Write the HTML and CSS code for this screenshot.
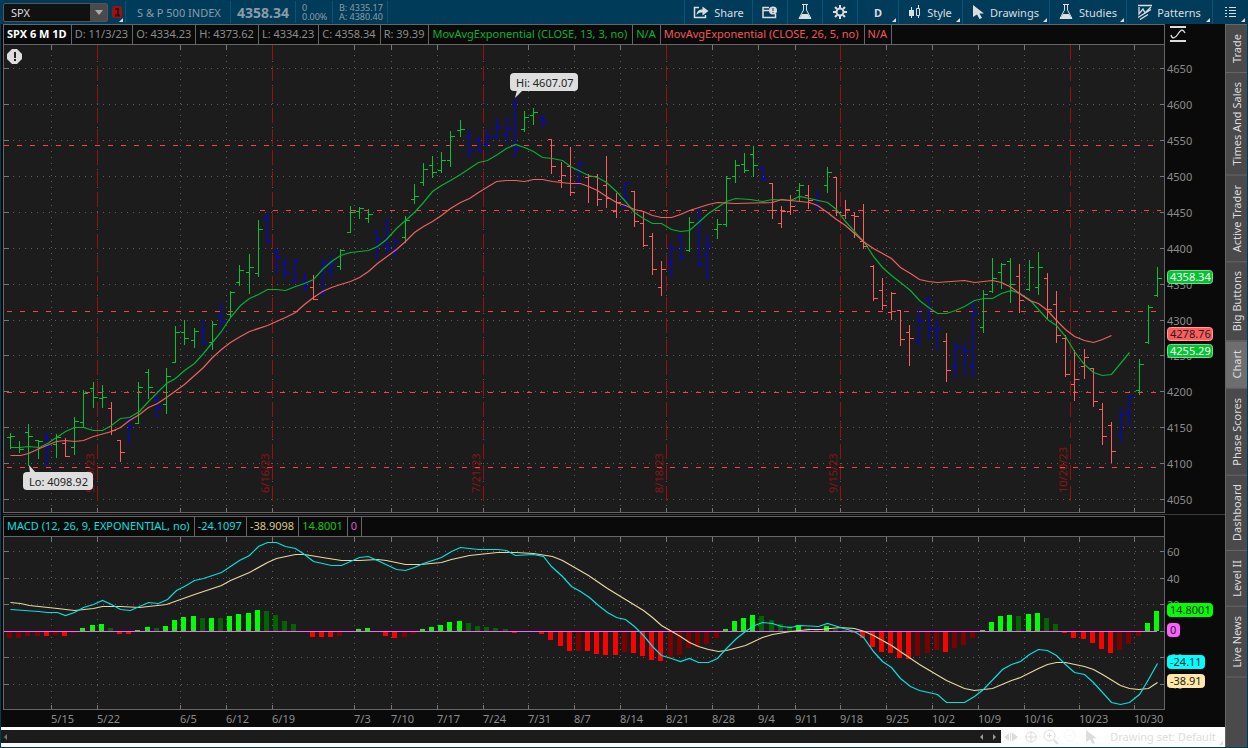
FILE: index.html
```html
<!DOCTYPE html>
<html lang="en">
<head>
    <meta charset="UTF-8">
    <meta name="viewport" content="width=device-width, initial-scale=1.0">
    <title>SPX Chart</title>
    <link rel="stylesheet" href="styles.css">
</head>
<body>
    <header class="toolbar">
        <div class="symbol">
            <input type="text" class="symbol-input" value="SPX" aria-label="Symbol">
            <button type="button" class="symbol-drop" aria-label="Recent symbols">
                <svg width="8" height="5"><path d="M0 0h8L4 5z" fill="#aaa"/></svg>
            </button>
        </div>
        <button type="button" class="link-btn corner" aria-label="Link colour">
            <svg width="10" height="12"><rect width="10" height="12" rx="2" fill="#9c1111"/><path d="M3 3h3v6M3 9.500h5" stroke="#3a0a0a" stroke-width="2" fill="none"/></svg>
        </button>
        <div class="info name">S &amp; P 500 INDEX</div>
        <div class="info last">4358.34</div>
        <div class="info pair change"><span>0</span><span>0.00%</span></div>
        <div class="info pair bidask"><span>B: 4335.17</span><span>A: 4380.40</span></div>
        <nav class="actions">
            <button type="button" class="tool w-share">
                <svg width="16" height="14" fill="none" stroke="#ddd"><path d="M6 2.500H1.500v10h11V10" stroke-width="1.500"/><path d="M3.500 10C4 6 6 4.500 9.500 4.500V1.500l6 4.500-6 4.500V7.500C7 7.500 5 8 3.500 10z" fill="#ddd" stroke="none"/></svg>
                Share
            </button>
            <button type="button" class="tool w-icon" aria-label="Chart alerts">
                <svg width="16" height="13" fill="none" stroke="#ddd"><path d="M7 1.500H1v10h12.500V8M1 4.500h6" stroke-width="1.500"/><circle cx="11" cy="4.500" r="4" fill="#ddd" stroke="none"/><path d="M11 2v3M11 6v1" stroke="#003b5a"/></svg>
            </button>
            <button type="button" class="tool w-icon" aria-label="Edit studies">
                <svg width="14" height="16" fill="none" stroke="#ddd"><path d="M4 .5h6M5.500 1v5L1 14.500h12L8.500 6V1"/><path d="M4 10h6l3 5H1z" fill="#ddd" stroke="none"/></svg>
            </button>
            <button type="button" class="tool w-icon" aria-label="Settings">
                <svg width="14" height="14" fill="none" stroke="#ddd"><circle cx="7" cy="7" r="3.500" stroke-width="2"/><path d="M7 0v3M7 11v3M0 7h3M11 7h3M2 2l2 2M10 10l2 2M12 2l-2 2M4 10l-2 2" stroke-width="2"/></svg>
            </button>
            <button type="button" class="tool w-period corner"><b>D</b></button>
            <button type="button" class="tool w-style corner">
                <svg width="12" height="14" fill="none" stroke="#ddd"><path d="M2.500 2v11M9.500 0v3M9.500 10v3"/><path d="M0 5h5v6H0z" fill="#ddd" stroke="none"/><path d="M7.500 3.500h3v7h-3z"/></svg>
                Style
            </button>
            <button type="button" class="tool w-drawings corner">
                <svg width="11" height="14"><path d="M0 0l11 8.500H6.500L9 13l-2.500 1L4 9.500 0 12z" fill="#ddd"/></svg>
                Drawings
            </button>
            <button type="button" class="tool w-studies corner">
                <svg width="14" height="16" fill="none" stroke="#ddd"><path d="M4 .5h6M5.500 1v5L1 14.500h12L8.500 6V1"/><path d="M4 10h6l3 5H1z" fill="#ddd" stroke="none"/></svg>
                Studies
            </button>
            <button type="button" class="tool w-patterns corner">
                <svg width="14" height="16" fill="none" stroke="#ddd"><path d="M0 1.500h14" stroke-width="1.500"/><path d="M1 3v7l4-5 2 4 6-6M0 13.500l13-8M2 15.500l8-5" stroke-width="1.300"/></svg>
                Patterns
            </button>
            <button type="button" class="tool w-menu corner" aria-label="Menu">
                <svg width="11" height="11" fill="#ddd"><path d="M0 0h2v1H0zM4 0h7v1H4zM0 3h2v1H0zM4 3h7v1H4zM0 6h2v1H0zM4 6h7v1H4zM0 9h2v1H0zM4 9h7v1H4z"/></svg>
            </button>
        </nav>
    </header>

    <main class="workspace">
        <div class="charts">
            <section class="chart-row price-row">
                <div class="panel">
                    <div class="legend">
                        <span class="title">SPX 6 M 1D</span>
                        <span>D: 11/3/23</span>
                        <span>O: 4334.23</span>
                        <span>H: 4373.62</span>
                        <span>L: 4334.23</span>
                        <span>C: 4358.34</span>
                        <span>R: 39.39</span>
                        <span class="study green">MovAvgExponential (CLOSE, 13, 3, no)</span>
                        <span class="green">N/A</span>
                        <span class="study red">MovAvgExponential (CLOSE, 26, 5, no)</span>
                        <span class="red">N/A</span>
                    </div>
                    <svg class="plot" id="pricePlot"></svg>
                </div>
                <div class="axis">
                    <button type="button" class="scale-btn" aria-label="Price scale">
                        <svg width="16" height="17" fill="none" stroke="#ddd"><path d="M0 1h16M0 15h16" stroke-width="2"/><path d="M1 9c1 4 4 4 7-1s5-5 7-1" stroke-width="1.300"/></svg>
                    </button>
                    <svg class="scale" id="priceAxis"></svg>
                </div>
            </section>
            <div class="splitter"></div>
            <section class="chart-row macd-row">
                <div class="panel">
                    <div class="legend">
                        <span class="cyan">MACD (12, 26, 9, EXPONENTIAL, no)</span>
                        <span class="cyan">-24.1097</span>
                        <span class="tan">-38.9098</span>
                        <span class="lime">14.8001</span>
                        <span class="pink">0</span>
                    </div>
                    <svg class="plot" id="macdPlot"></svg>
                </div>
                <div class="axis">
                    <div class="axis-head"></div>
                    <svg class="scale" id="macdAxis"></svg>
                </div>
            </section>
            <svg class="dates" id="dates"></svg>
            <footer class="bottom">
                <div class="scrollbar">
                    <button type="button" aria-label="Scroll left"><svg width="3" height="6"><path d="M3 0v6L0 3z" fill="#777"/></svg></button>
                    <span class="track"></span>
                    <button type="button" aria-label="Scroll left one bar"><svg width="3" height="6"><path d="M3 0v6L0 3z" fill="#999"/></svg></button>
                    <button type="button" aria-label="Scroll right"><svg width="3" height="6"><path d="M0 0v6l3-3z" fill="#999"/></svg></button>
                </div>
                <div class="zoom-tools">
                    <button type="button" aria-label="Pan"><svg width="14" height="10" fill="#ddd"><path d="M0 5l5-4v8zM14 5L9 1v8zM6 1h1v8H6zM8 1h1v8H8z"/></svg></button>
                    <button type="button" aria-label="Crosshair"><svg width="12" height="12" fill="none" stroke="#ddd"><circle cx="6" cy="6" r="5"/><path d="M6 0v12M0 6h12"/></svg></button>
                    <button type="button" aria-label="Zoom in"><svg width="16" height="16" fill="none" stroke="#ddd"><circle cx="6.500" cy="6.500" r="5.500"/><path d="M6.500 4v5M4 6.500h5"/><path d="M11 11l4 4" stroke-width="2"/></svg></button>
                    <button type="button" aria-label="Zoom out"><svg width="16" height="16" fill="none" stroke="#f8f8f8"><circle cx="6.500" cy="6.500" r="5.500"/><path d="M4 6.500h5"/></svg></button>
                    <button type="button" aria-label="Pointer"><svg width="11" height="14"><path d="M0 0l11 8.500H6.500L9 13l-2.500 1L4 9.500 0 12z" fill="#ddd"/></svg></button>
                </div>
                <button type="button" class="drawing-set corner">Drawing set: Default</button>
            </footer>
        </div>
        <nav class="tabs">
            <button type="button">Trade</button>
            <button type="button">Times And Sales</button>
            <button type="button">Active Trader</button>
            <button type="button">Big Buttons</button>
            <button type="button" class="active">Chart</button>
            <button type="button">Phase Scores</button>
            <button type="button">Dashboard</button>
            <button type="button">Level II</button>
            <button type="button">Live News</button>
        </nav>
    </main>

    <script src="chart.js"></script>
</body>
</html>
```

FILE: styles.css
```css
* {
    margin: 0;
    padding: 0;
    box-sizing: border-box;
}

body {
    display: flex;
    flex-direction: column;
    height: 100vh;
    padding: 0 1px 1px;
    overflow: hidden;
    background-color: #003b5a;
    font-family: "Noto Sans", sans-serif;
    font-size: 11px;
    color: #8c8c8c;
}

button, input {
    border: none;
    background: none;
    font: inherit;
    color: inherit;
}

svg {
    display: block;
    flex-shrink: 0;
}

/* Toolbar */
.toolbar {
    display: flex;
    align-items: center;
    height: 24px;
    flex-shrink: 0;
}

.symbol {
    display: flex;
    width: 105px;
    height: 19px;
    margin-left: 2px;
    border: 1px solid #555;
    border-radius: 2px;
    background-color: #111;
}

.symbol-input {
    flex: 1;
    min-width: 0;
    padding-left: 7px;
    color: #ddd;
}

.symbol-drop {
    display: flex;
    align-items: center;
    justify-content: center;
    width: 17px;
    background-color: #4a4a4a;
}

.corner {
    position: relative;
}

.corner::after {
    content: "";
    position: absolute;
    right: 2px;
    bottom: 2px;
    border-left: 4px solid transparent;
    border-bottom: 4px solid #ddd;
}

.link-btn {
    display: flex;
    align-items: center;
    justify-content: center;
    width: 17px;
    height: 24px;
}

.info {
    display: flex;
    align-items: center;
    height: 22px;
    border-left: 1px solid #0a5278;
    color: #8b9ba6;
}

.name {
    width: 105px;
    padding-left: 11px;
    font-size: 11px;
}

.last {
    width: 65px;
    padding-left: 6px;
    font-size: 14px;
    font-weight: bold;
}

.pair {
    flex-direction: column;
    align-items: flex-start;
    justify-content: center;
    padding-left: 6px;
    font-size: 9px;
    line-height: 9px;
}

.change {
    width: 37px;
}

.bidask {
    width: 56px;
    border-right: 1px solid #0a5278;
}

.actions {
    display: flex;
    margin-left: auto;
}

.tool {
    display: flex;
    align-items: center;
    justify-content: center;
    gap: 6px;
    height: 24px;
    border-left: 1px solid #0a5278;
    color: #ddd;
    white-space: nowrap;
}

.w-share { width: 68px; gap: 5px; }
.w-icon { width: 35px; }
.w-period { width: 41px; }
.w-style { width: 64px; }
.w-drawings { width: 87px; }
.w-studies { width: 77px; }
.w-patterns { width: 86px; gap: 5px; }
.w-menu { width: 35px; }

/* Workspace */
.workspace {
    display: flex;
    flex: 1;
    min-height: 0;
}

.charts {
    display: flex;
    flex-direction: column;
    flex: 1;
    min-width: 0;
    background-color: #0a0a0a;
}

.chart-row {
    display: flex;
    min-height: 0;
    padding-left: 2px;
}

.price-row { flex: 489; }
.macd-row { flex: 194; }

.panel {
    display: flex;
    flex-direction: column;
    flex: 1;
    min-width: 0;
    border: 1px solid #666;
    background-color: #1c1c1c;
}

.legend {
    display: flex;
    height: 20px;
    flex-shrink: 0;
    border-bottom: 1px solid #666;
    background-color: #0a0a0a;
    line-height: 17px;
    white-space: nowrap;
}

.legend span {
    padding: 0 4px 0 3px;
    border-right: 1px solid #666;
}

.legend .study {
    padding: 0 5px 0 3px;
}

.legend .title { color: #fff; font-weight: bold; }
.green { color: #10b030; }
.red { color: #f05858; }
.cyan { color: #10dede; }
.tan { color: #d8c690; }
.lime { color: #10c810; }
.pink { color: #d858d8; }

.plot, .scale {
    width: 100%;
    flex: 1;
    min-height: 0;
}

.axis {
    display: flex;
    flex-direction: column;
    width: 60px;
    padding-bottom: 1px;
}

.scale-btn, .axis-head {
    height: 21px;
    padding: 2px 5px;
}

.splitter {
    height: 3px;
    margin-left: 2px;
    border-top: 1px solid #0a0a0a;
    border-bottom: 1px solid #0a0a0a;
    background-color: #3a3a3a;
}

.dates {
    width: 100%;
    height: 17px;
}

svg text {
    fill: #8c8c8c;
    font-size: 11px;
}

svg .expiry {
    fill: #8a1414;
}

/* Bottom bar */
.bottom {
    display: flex;
    align-items: center;
    height: 20px;
    background-color: #fff;
    color: #ddd;
}

.scrollbar {
    display: flex;
    align-items: center;
    flex: 1;
    gap: 10px;
    height: 13px;
    margin-bottom: 1px;
    padding: 0 5px 0 3px;
    background-color: #1c1c1c;
}

.track {
    flex: 1;
}

.zoom-tools {
    display: flex;
}

.zoom-tools button {
    display: flex;
    align-items: center;
    justify-content: center;
    width: 20px;
    height: 20px;
}

.drawing-set {
    width: 124px;
    height: 20px;
    padding-bottom: 2px;
    text-align: center;
}

/* Side tabs */
.tabs {
    display: flex;
    flex-direction: column;
    width: 22px;
    border-left: 1px solid #666;
    border-top: 1px solid #666;
    background-color: #4a4a4a;
}

.tabs button {
    padding: 9px 0;
    border-top: 1px solid #666;
    color: #ddd;
    line-height: 20px;
    writing-mode: vertical-rl;
    transform: rotate(180deg);
}

.tabs .active {
    background-color: #6e6e6e;
}
```

FILE: chart.js
```js
const NS = "http://www.w3.org/2000/svg";
const GREEN = "#06c232", RED = "#ff5c5c", BLUE = "#0000f0";
const barColors = { g: GREEN, r: RED, b: BLUE };
const histColors = { G: "#00ff00", g: "#006400", R: "#ff0000", r: "#7d0000" };

// design size of the plots, everything is scaled from it
const W = 1160, PRICE_H = 467, MACD_H = 172;

// high low open close colour
const bars = `433 448 437 436 g|441 452 447 449 g|424 465 432 436 g|440 458 440 441 g|432 465 436 446 b|434 457 444 437 g|438 456 443 456 r|417 454 447 421 g|390 427 422 393 g|382 407 388 397 g|385 407 398 397 g|402 434 408 430 r|440 461 440 452 r|417 443 418 426 b|382 423 423 387 g|369 398 372 387 g|395 417 398 406 b|368 413 404 376 g|326 362 362 332 g|320 344 332 338 g|328 347 340 331 g|320 345 330 343 b|321 349 342 324 g|303 327 316 320 b|291 316 314 292 g|265 285 282 270 g|254 293 272 267 g|220 276 273 229 g|213 243 218 241 b|248 272 251 256 b|258 277 262 272 b|260 283 280 261 b|272 291 281 285 b|275 299 287 299 r|259 295 293 263 b|255 277 271 264 b|249 269 266 250 g|206 232 232 212 g|207 218 211 208 g|209 222 218 214 g|231 259 231 239 b|219 252 244 248 b|239 256 252 241 b|216 242 237 220 g|184 203 199 196 g|163 185 182 169 g|156 177 165 172 g|152 172 170 160 g|131 166 160 136 g|120 136 130 129 g|129 157 137 151 b|136 151 140 150 b|130 146 145 137 b|118 139 136 127 b|117 143 134 128 b|98 156 105 149 b|111 131 129 117 g|108 124 115 112 g|115 127 119 121 b|139 173 139 166 r|162 187 180 175 r|147 195 166 192 r|162 183 182 163 b|174 202 177 176 r|174 205 176 199 r|156 207 185 198 r|193 217 211 202 r|183 207 206 183 b|191 226 191 221 r|212 246 223 245 r|233 274 236 269 r|261 295 287 269 r|242 277 262 248 b|234 261 237 257 b|217 251 250 222 g|207 266 208 265 b|234 279 255 244 b|219 238 229 224 g|176 226 224 178 g|160 182 176 165 g|153 172 164 170 g|146 176 154 165 g|166 180 169 178 b|183 218 183 210 r|206 227 223 211 r|195 214 211 206 r|183 200 190 185 g|185 208 195 200 r|191 209 204 200 b|167 192 185 172 g|177 215 177 212 r|200 218 215 209 r|212 237 215 216 r|204 248 241 246 r|265 300 266 298 r|278 309 290 305 r|292 319 312 293 r|310 345 310 339 r|325 365 332 338 r|307 345 341 320 b|296 339 299 328 b|319 349 331 328 b|333 381 341 370 r|342 377 367 346 b|343 374 349 350 b|302 377 366 313 b|290 332 327 294 g|258 292 291 278 g|263 288 272 264 g|258 302 261 284 g|264 312 276 300 r|260 290 289 267 g|252 294 287 267 g|273 318 278 309 r|291 342 304 335 r|335 376 338 374 r|350 400 384 379 r|349 378 366 357 r|368 406 368 401 r|403 444 409 436 r|422 462 425 451 r|408 441 435 415 b|395 426 412 396 b|359 394 390 364 g|305 343 342 307 g|267 296 295 278 g`
    .split("|").map(row => row.split(" "));

const maFast = "10,447 20,447 28,446 39,447 47,443 56,437 65,431 74,427 83,427 93,430 102,430 111,425 120,418 129,417 139,411 148,401 157,392 166,383 175,378 184,370 194,363 203,353 212,342 221,331 230,317 240,305 249,298 258,294 267,289 276,289 285,290 295,286 304,283 313,279 322,269 331,261 340,255 350,252 368,250 377,246 386,239 396,228 414,212 423,202 432,191 441,185 450,180 460,174 469,168 478,162 487,160 497,154 506,148 515,144 524,147 533,151 542,157 552,158 562,160 570,166 580,171 588,175 597,177 606,182 616,191 625,201 634,212 643,218 652,223 661,223 671,229 680,231 689,230 698,222 708,213 717,207 726,201 735,198 750,199 762,201 772,199 790,200 799,196 809,198 827,202 836,209 845,221 854,231 864,242 873,256 882,267 891,275 900,282 910,290 919,300 928,307 937,313 946,313 955,310 964,306 974,300 983,298 992,298 1001,293 1011,290 1019,293 1029,299 1038,309 1047,319 1056,325 1065,336 1074,351 1084,364 1093,372 1102,375 1111,374 1120,363 1129,352";
const maSlow = "10,455 20,455 28,453 39,448 56,441 65,440 74,441 83,440 93,436 111,431 120,427 129,420 139,414 148,407 157,403 166,397 184,384 203,367 212,357 221,349 230,342 240,336 249,331 267,325 285,317 295,312 304,304 313,297 322,291 331,287 340,284 350,281 359,277 368,271 377,263 396,249 405,241 414,232 423,226 432,221 441,215 450,208 460,202 469,198 478,192 496,181 506,180 515,180 524,181 533,179 542,179 552,181 570,183 580,183 588,186 597,190 606,196 616,202 625,205 634,209 643,211 652,215 661,217 671,217 680,214 689,210 708,204 717,202 735,203 772,202 781,199 790,200 809,202 817,205 827,212 836,219 845,225 854,233 864,242 873,248 891,258 900,267 910,273 919,279 928,281 937,282 964,280 974,282 992,280 1001,282 1011,287 1019,293 1029,300 1038,303 1047,310 1056,320 1065,329 1074,336 1084,340 1093,342 1102,339 1111,335";

const macdLine = "10,609 38,611 47,612 57,612 65,615 74,612 83,607 93,604 102,600 111,604 120,609 130,610 148,602 158,603 167,599 176,590 184,586 194,580 203,578 221,572 239,560 249,555 258,546 267,542 276,542 285,546 295,548 304,554 313,561 331,565 341,565 359,557 368,556 377,560 396,569 405,570 414,567 423,563 441,557 451,551 460,547 478,549 497,549 506,550 515,555 533,554 543,556 551,566 562,576 571,586 580,591 589,597 598,605 607,612 616,617 625,619 634,626 643,635 652,646 661,655 671,658 680,661 689,658 698,662 708,662 717,658 726,648 736,638 745,631 754,625 762,622 772,623 781,626 790,627 800,625 818,626 827,623 840,627 854,631 863,637 873,651 882,661 891,667 900,678 910,686 919,690 937,694 946,702 964,702 974,696 983,689 1002,669 1011,664 1020,661 1029,654 1038,649 1047,650 1056,655 1065,664 1074,672 1084,674 1093,682 1111,702 1120,704 1129,702 1139,694 1148,679 1157,663";
const signalLine = "10,602 20,603 29,605 57,608 74,610 93,608 102,606 120,606 139,607 166,604 194,594 221,585 230,580 249,572 267,562 276,558 295,554 304,554 322,557 341,560 359,560 377,559 386,560 405,564 420,564 441,562 451,559 469,555 497,552 515,552 533,553 552,556 562,560 588,575 607,588 625,599 643,610 652,617 661,625 680,636 689,642 698,646 708,649 718,651 726,650 745,645 762,637 772,634 790,631 809,629 820,629 840,627 854,628 864,631 873,635 891,645 919,664 946,680 964,688 974,690 992,688 1011,680 1020,677 1038,668 1047,664 1056,662 1065,662 1084,666 1093,669 1102,674 1120,685 1129,688 1138,689 1148,688 1157,682";

const hist = "r638 r638 r636 r636 R636 r635 R636 r633 G628 G625 G624 g628 R634 R634 G630 G627 g628 G626 G620 G617 G616 g618 G618 g618 G616 G614 G613 G610 g611 g615 g621 g624 g631 R637 R637 R637 r636 r632 G629 G628 R632 R636 R638 r637 r634 G629 G627 G625 G622 G621 g623 g626 g627 g628 g629 R633 r632 r632 R634 R640 R646 R651 r651 R651 R654 R655 R655 r652 R653 R656 R660 R661 r658 r655 r648 r647 r644 r638 G629 G621 G618 G615 g616 g620 g624 g626 G625 g628 g629 G626 g629 g630 R633 R638 R647 R652 R653 R658 R659 r656 r653 r650 R652 r648 r645 r638 G630 G622 G616 G615 g616 G614 G613 g618 g624 R633 R638 R639 R643 R649 R653 r650 r644 r636 G623 G611".split(" ");

const weeks = [[51, "5/15"], [97, "5/22"], [180, "6/5"], [226, "6/12"], [272, "6/19"], [354, "7/3"], [391, "7/10"], [437, "7/17"], [483, "7/24"], [528, "7/31"], [574, "8/7"], [620, "8/14"], [666, "8/21"], [712, "8/28"], [758, "9/4"], [795, "9/11"], [840, "9/18"], [886, "9/25"], [932, "10/2"], [978, "10/9"], [1024, "10/16"], [1079, "10/23"], [1134, "10/30"]];
const expiries = [[97, "5/19/23"], [272, "6/16/23"], [483, "7/21/23"], [666, "8/18/23"], [840, "9/15/23"], [1070, "10/20/23"]];
const priceTicks = [[68, 4650], [104, 4600], [140, 4550], [176, 4500], [212, 4450], [248, 4400], [284, 4350], [320, 4300], [355, 4250], [391, 4200], [427, 4150], [463, 4100], [499, 4050]];
const macdTicks = [[551, "60"], [578, "40"], [604, "20"], [657, "-20"], [684, "-40"]];
const levels = [[4, 145], [260, 210], [7, 311], [7, 392], [7, 467]];

function add(svg, tag, attrs, text) {
    const el = document.createElementNS(NS, tag);
    for (const key in attrs) el.setAttribute(key, attrs[key]);
    if (text !== undefined) el.textContent = text;
    svg.appendChild(el);
    return el;
}

function rect(svg, x, y, width, height, fill) {
    add(svg, "rect", { x, y, width, height, fill, "shape-rendering": "crispEdges" });
}

// clears the svg and gives back the two scales
function setup(id, top, height, width) {
    const svg = document.getElementById(id);
    svg.innerHTML = "";
    const sx = width ? svg.clientWidth / width : 1;
    const sy = svg.clientHeight / height;
    return {
        svg,
        X: x => Math.round((x - 4) * sx),
        Y: y => Math.round((y - top) * sy),
        w: svg.clientWidth,
        h: svg.clientHeight
    };
}

function hline(svg, x1, x2, y, stroke, dash) {
    add(svg, "path", { d: `M${x1} ${y + 0.5}H${x2}`, stroke, "stroke-dasharray": dash, "shape-rendering": "crispEdges" });
}

function vline(svg, x, y1, y2, stroke, dash) {
    add(svg, "path", { d: `M${x + 0.5} ${y1}V${y2}`, stroke, "stroke-dasharray": dash, "shape-rendering": "crispEdges" });
}

function grid(c, ticks) {
    ticks.forEach(([y]) => {
        hline(c.svg, 9, c.w - 5, c.Y(y), "#5c5c5c", "1 5");
        rect(c.svg, 0, c.Y(y), 5, 1, "#777");
        rect(c.svg, c.w - 4, c.Y(y), 4, 1, "#777");
    });
    weeks.forEach(([x]) => {
        vline(c.svg, c.X(x), 10, c.h - 5, "#5c5c5c", "1 5");
        rect(c.svg, c.X(x), 0, 1, 5, "#777");
        rect(c.svg, c.X(x), c.h - 4, 1, 4, "#777");
    });
}

function line(c, points, stroke) {
    const d = points.split(" ").map(p => {
        const [x, y] = p.split(",").map(Number);
        return (c.X(x) + 0.5) + "," + (c.Y(y) + 0.5);
    }).join(" ");
    add(c.svg, "polyline", { points: d, fill: "none", stroke, "stroke-width": 1.2 });
}

// the tail runs from the box edge to the bar at (tipX, tipY)
function callout(c, x, y, width, tipX, tipY, text) {
    const px = c.X(x), py = c.Y(y);
    const edge = tipY > y ? py + 17 : py + 1;
    add(c.svg, "rect", { x: px, y: py, width, height: 18, rx: 4, fill: "#dedede" });
    add(c.svg, "path", { d: `M${px + 7} ${edge}L${c.X(tipX)} ${c.Y(tipY)}L${px + 13} ${edge}z`, fill: "#dedede" });
    add(c.svg, "text", { x: px + 6, y: py + 14, style: "fill:#222" }, text);
}

function drawPrice() {
    const c = setup("pricePlot", 45, PRICE_H, W);
    grid(c, priceTicks);
    expiries.forEach(([x, label]) => {
        vline(c.svg, c.X(x), 0, c.h - 8, "#961010", "15 6");
        const tx = c.X(x) - 3, ty = c.Y(493);
        add(c.svg, "text", { x: tx, y: ty, transform: `rotate(-90 ${tx} ${ty})`, class: "expiry" }, label);
    });
    levels.forEach(([x, y]) => hline(c.svg, c.X(x), c.w - 3, c.Y(y), "#ff4040", "5 8"));
    bars.forEach(([high, low, open, close, color], i) => {
        const x = c.X(Math.round(10 + i * 9.176)), fill = barColors[color];
        rect(c.svg, x, c.Y(high), 1, c.Y(low) - c.Y(high) + 1, fill);
        rect(c.svg, x - 3, c.Y(open), 3, 1, fill);
        rect(c.svg, x + 1, c.Y(close), 4, 1, fill);
    });
    line(c, maFast, "#08b035");
    line(c, maSlow, "#f06060");
    callout(c, 510, 73, 68, 515, 98, "Hi: 4607.07");
    callout(c, 23, 472, 70, 29, 465, "Lo: 4098.92");
    // notice badge
    add(c.svg, "path", { d: "M8 4h5l5 5v5l-5 5H8l-5-5V9z", fill: "#ddd" });
    rect(c.svg, 10, 7, 2, 6, "#222");
    rect(c.svg, 10, 14, 2, 2, "#222");
}

function drawMacd() {
    const c = setup("macdPlot", 537, MACD_H, W);
    grid(c, macdTicks);
    const zero = c.Y(631);
    hist.forEach((item, i) => {
        const x = c.X(Math.round(10 + i * 9.176)) - 3, y = c.Y(Number(item.slice(1)));
        rect(c.svg, x, Math.min(y, zero), 5, Math.abs(y - zero), histColors[item[0]]);
    });
    rect(c.svg, 0, zero, c.X(1157), 1, "#ff60ff");
    rect(c.svg, c.w - 4, zero, 4, 1, "#777");
    line(c, signalLine, "#e8d8a0");
    line(c, macdLine, "#08e0e0");
}

function tag(c, y, width, text, fill, border, color) {
    add(c.svg, "rect", { x: 2.5, y: c.Y(y) + 0.5, width: width - 1, height: 13, rx: 3, fill, stroke: border });
    add(c.svg, "text", { x: 5, y: c.Y(y) + 11, style: "fill:" + color }, text);
}

function drawAxes() {
    let c = setup("priceAxis", 45, PRICE_H);
    priceTicks.forEach(([y, label]) => add(c.svg, "text", { x: 2, y: c.Y(y) + 5 }, label));
    tag(c, 270, 46, "4358.34", "#06c232", "#70e088", "#fff");
    tag(c, 327, 46, "4278.76", "#ff5c5c", "#ff9c9c", "#222");
    tag(c, 344, 46, "4255.29", "#06c232", "#70e088", "#fff");

    c = setup("macdAxis", 537, MACD_H);
    macdTicks.forEach(([y, label]) => add(c.svg, "text", { x: 2, y: c.Y(y) + 5 }, label));
    tag(c, 603, 46, "14.8001", "#00ff00", "#00ff00", "#222");
    tag(c, 623, 13, "0", "#ff60ff", "#ff60ff", "#222");
    tag(c, 655, 38, "-24.11", "#00ffff", "#00ffff", "#222");
    tag(c, 674, 38, "-38.91", "#ffe8a8", "#ffe8a8", "#222");

    const plot = document.getElementById("macdPlot");
    const d = setup("dates", 0, 17);
    weeks.forEach(([x, label]) => {
        add(d.svg, "text", { x: Math.round((x - 4) * plot.clientWidth / W) + 3, y: 13 }, label);
    });
}

function draw() {
    drawPrice();
    drawMacd();
    drawAxes();
}

window.addEventListener("resize", draw);
draw();
```
